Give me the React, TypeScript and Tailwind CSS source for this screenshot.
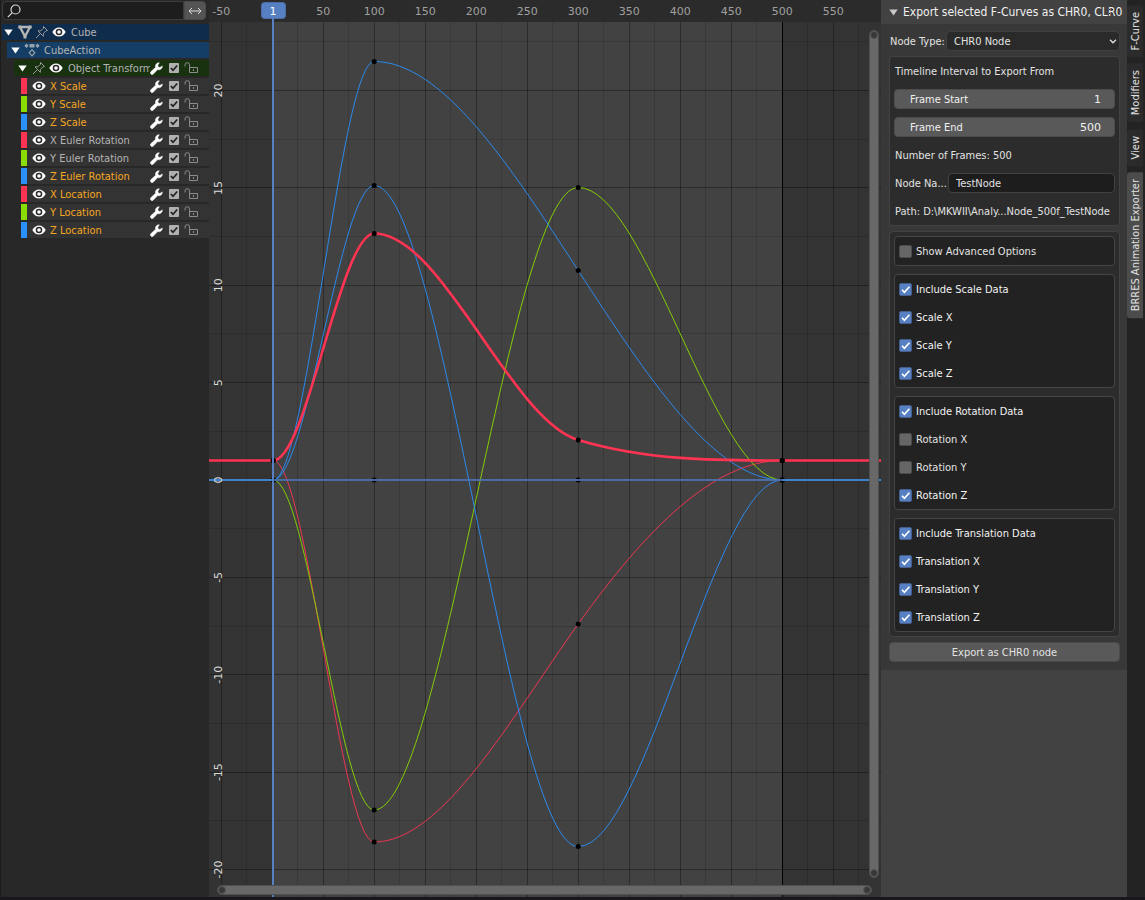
import type { ReactNode } from "react";

const RED = "#ff3352";
const GREEN = "#8bdc00";
const BLUE = "#2890ff";

/* ---------- icons ---------- */

function Eye() {
  return (
    <svg viewBox="0 0 14 12" className="h-3 w-3.5 shrink-0">
      <path d="M.3 6C2 3 4.300 1.500 7 1.500S12 3 13.700 6C12 9 9.700 10.500 7 10.500S2 9 .3 6z" fill="#fff" />
      <circle cx="7" cy="6" r="3.300" fill="#2c2c2c" />
      <circle cx="7" cy="6" r="1.800" fill="#fff" />
    </svg>
  );
}

function Pin() {
  return (
    <svg viewBox="0 0 14 14" className="size-3.5 shrink-0" fill="none" stroke="#9a9a9a" strokeWidth="1">
      <path d="M8.500 1.500l4 4-1.500.3-2.500 2.500-.2 3L3 6l3-.3 2.500-2.500zM5.300 8.700L1 13" strokeLinejoin="round" />
    </svg>
  );
}

function Wrench() {
  return (
    <svg viewBox="0 0 13 13" className="size-[13px] shrink-0">
      <path
        d="M9.300.8A3.500 3.500 0 0 0 5.600 5.300L1 9.600a1.600 1.600 0 0 0 2.300 2.500L7.700 7.600A3.500 3.500 0 0 0 12.300 3.900L9.900 5.400 8 4.800 7.900 3z"
        fill="#fff"
        stroke="#fff"
        strokeWidth=".5"
      />
    </svg>
  );
}

function Lock() {
  return (
    <svg viewBox="0 0 15 12" className="h-3 w-[15px] shrink-0" fill="none" stroke="#8c8c8c">
      <path d="M1 4.500V3a2.300 2.300 0 0 1 4.600 0v3.500M5.500 5.500h8v5h-8zM9.500 7v2" />
    </svg>
  );
}

function Triangle({ className = "" }: { className?: string }) {
  return (
    <svg viewBox="0 0 9 7" className={`h-[7px] w-[9px] shrink-0 ${className}`}>
      <path d="M.3.5h8.400L4.500 6.500z" fill="currentColor" />
    </svg>
  );
}

function MeshIcon() {
  return (
    <svg viewBox="0 0 14 14" className="size-3.5 shrink-0">
      <path d="M2 2h10L7 11.500z" fill="none" stroke="#b4b4b4" strokeWidth="2.400" strokeLinejoin="round" />
      <path d="M.3.6h3v3h-3zM10.700.6h3v3h-3zM5.500 10.700h3v2.800h-3z" fill="#b4b4b4" />
    </svg>
  );
}

function ActionIcon() {
  return (
    <svg viewBox="0 0 16 14" className="h-3.5 w-4 shrink-0" fill="#96a3ae">
      <path d="M2.500.5l2.200 2.200-2.200 2.200L.3 2.700zM13.500.5l2.200 2.200-2.200 2.200-2.200-2.200zM5.500 1h5v3.500h-5z" />
      <path d="M8 6.700l2.800 3.100L8 12.900 5.200 9.800z" fill="none" stroke="#96a3ae" strokeWidth="1.200" />
    </svg>
  );
}

/* ---------- channel list ---------- */

function RowTools({ name }: { name: string }) {
  return (
    <div className="flex items-center pr-[10px]">
      <button aria-label={`Modifiers of ${name}`}>
        <Wrench />
      </button>
      <label className="ml-[6px] grid size-[10px] place-items-center">
        <input
          type="checkbox"
          defaultChecked
          aria-label={`Enable ${name}`}
          className="peer col-start-1 row-start-1 size-[10px] appearance-none rounded-[1px] bg-[#b0b0b0]"
        />
        <svg viewBox="0 0 10 10" className="pointer-events-none invisible col-start-1 row-start-1 size-[10px] peer-checked:visible">
          <path d="M1.800 5l2.200 2.200 4.200-4.700" fill="none" stroke="#222" strokeWidth="1.700" />
        </svg>
      </label>
      <button aria-label={`Lock ${name}`} className="ml-[5px]">
        <Lock />
      </button>
    </div>
  );
}

const channels = [
  { name: "X Scale", swatch: "bg-[#ff3352]", selected: true },
  { name: "Y Scale", swatch: "bg-[#8bdc00]", selected: true },
  { name: "Z Scale", swatch: "bg-[#2890ff]", selected: true },
  { name: "X Euler Rotation", swatch: "bg-[#ff3352]", selected: false },
  { name: "Y Euler Rotation", swatch: "bg-[#8bdc00]", selected: false },
  { name: "Z Euler Rotation", swatch: "bg-[#2890ff]", selected: true },
  { name: "X Location", swatch: "bg-[#ff3352]", selected: true },
  { name: "Y Location", swatch: "bg-[#8bdc00]", selected: true },
  { name: "Z Location", swatch: "bg-[#2890ff]", selected: true },
];

function ChannelList() {
  return (
    <aside className="w-[209px] shrink-0 overflow-hidden border-l border-[#1c1c1c] bg-[#282828] text-[#b4b4b4]">
      <div className="mr-[3px] ml-px flex h-[22px] py-px">
        <div className="flex h-[19px] min-w-0 flex-1 items-center rounded-l-[4px] border border-[#3d3d3d] bg-[#1d1d1d] pl-1">
          <svg viewBox="0 0 14 14" className="size-3.5 shrink-0" fill="none" stroke="#d8d8d8" strokeWidth="1.200">
            <circle cx="8.500" cy="5.500" r="4.500" />
            <path d="M5.300 8.700L.8 13.200" />
          </svg>
          <input aria-label="Search channels" className="min-w-0 flex-1 bg-transparent px-1 outline-none" />
        </div>
        <button aria-label="Invert filter" className="grid h-[19px] w-[22px] place-items-center rounded-r-[4px] border border-[#4a4a4a] bg-[#545454]">
          <svg viewBox="0 0 14 8" className="h-2 w-3.5" fill="none" stroke="#dcdcdc">
            <path d="M1 4h12M4 1L1 4l3 3M10 1l3 3-3 3" />
          </svg>
        </button>
      </div>
      <ul className="mt-[2px] flex flex-col gap-[2px]">
        <li className="ml-px flex h-4 items-center bg-[#0f2c4d] pl-[2px]">
          <Triangle className="text-white" />
          <span className="ml-[5px]"><MeshIcon /></span>
          <button aria-label="Pin Cube" className="ml-[3px]"><Pin /></button>
          <button aria-label="Show Cube" className="ml-[3px]"><Eye /></button>
          <span className="ml-[5px]">Cube</span>
        </li>
        <li className="ml-[6px] flex h-4 items-center bg-[#153e66] pl-1">
          <Triangle className="text-white" />
          <span className="ml-[4px]"><ActionIcon /></span>
          <span className="ml-1">CubeAction</span>
        </li>
        <li className="ml-[13px] flex h-4 items-center bg-[#18310f] pl-1">
          <Triangle className="text-white" />
          <button aria-label="Pin Object Transforms" className="ml-[5px]"><Pin /></button>
          <button aria-label="Show Object Transforms" className="ml-[3px]"><Eye /></button>
          <span className="ml-[5px] min-w-0 flex-1 overflow-hidden whitespace-nowrap">Object Transforms</span>
          <RowTools name="Object Transforms" />
        </li>
        {channels.map((c) => (
          <li key={c.name} className="ml-5 flex h-4 items-center bg-[#333]">
            <span className={`h-4 w-[6px] ${c.swatch}`} />
            <button aria-label={`Show ${c.name}`} className="ml-[5px]"><Eye /></button>
            <span className={c.selected ? "ml-1 flex-1 whitespace-nowrap text-[#f5a623]" : "ml-1 flex-1 whitespace-nowrap"}>{c.name}</span>
            <RowTools name={c.name} />
          </li>
        ))}
      </ul>
    </aside>
  );
}

/* ---------- graph ---------- */

const frameX = (f: number) => 63.2 + f * 1.02;
const valueY = (v: number) => 480 - v * 19.475;

/* Keys are [x, y]; slopes are dy/dx at each key. Handles span a third of the interval. */
type Key = [number, number];

function curvePath(keys: Key[], slopes: number[]) {
  let d = `M${keys[0][0]} ${keys[0][1]}`;
  for (let i = 1; i < keys.length; i++) {
    const [x0, y0] = keys[i - 1];
    const [x1, y1] = keys[i];
    const h = (x1 - x0) / 3;
    d += `C${x0 + h} ${y0 + slopes[i - 1] * h} ${x1 - h} ${y1 - slopes[i] * h} ${x1} ${y1}`;
  }
  return d;
}

const X = [1, 100, 300, 500].map(frameX);
const curves = [
  { color: RED, width: 1, ys: [460.5, 842, 624, 460.5], slope: -1.4 },
  { color: GREEN, width: 1, ys: [480, 810, 187.5, 480], slope: 0 },
  { color: BLUE, width: 1, ys: [480, 61.5, 270.5, 480], slope: 1.54 },
  { color: BLUE, width: 1, ys: [480, 185.5, 846.5, 480], slope: 0 },
  { color: RED, width: 2.6, ys: [460.5, 233.5, 440, 460.5], slope: 0.3 },
];

const frames = Array.from({ length: 13 }, (_, i) => -50 + i * 50);
const values = [20, 15, 10, 5, 0, -5, -10, -15, -20];

function Graph() {
  return (
    <main className="relative min-w-0 flex-1 overflow-hidden bg-[#333]">
      <svg viewBox="0 0 672 897" preserveAspectRatio="xMinYMin slice" className="absolute inset-0 size-full" role="img" aria-label="F-Curves">
        <rect width="672" height="897" fill="#333" />
        <rect x={frameX(1)} y="22" width={frameX(500) - frameX(1)} height="875" fill="#424242" />
        <g shapeRendering="crispEdges">
          {frames.map((f) => (
            <g key={f}>
              <path d={`M${frameX(f + 25)} 22V897`} stroke="#000" strokeOpacity=".13" />
              <path d={`M${frameX(f)} 22V897`} stroke="#000" strokeOpacity=".33" />
            </g>
          ))}
          {values.map((v) => (
            <g key={v}>
              <path d={`M0 ${valueY(v + 2.5)}H672`} stroke="#000" strokeOpacity=".13" />
              <path d={`M0 ${valueY(v)}H672`} stroke="#000" strokeOpacity=".33" />
            </g>
          ))}
          <path d={`M${frameX(500)} 22V897`} stroke="#000" />
        </g>
        <g fill="none">
          {curves.map((c, i) => (
            <path
              key={i}
              d={curvePath(
                X.map((x, k) => [x, c.ys[k]] as Key),
                [0, 0, c.slope, 0],
              )}
              stroke={c.color}
              strokeOpacity={c.width > 1 ? 1 : 0.9}
              strokeWidth={c.width}
            />
          ))}
          <path d={`M0 460.500H${X[0]}M${X[3]} 460.500H672`} stroke={RED} strokeWidth="2.600" />
        </g>
        <g fill="#000">
          {curves.flatMap((c, i) => c.ys.map((y, k) => <circle key={`${i}-${k}`} cx={X[k]} cy={y} r="2.500" />))}
          <circle cx={X[1]} cy="480" r="2.500" />
          <circle cx={X[2]} cy="480" r="2.500" />
        </g>
        <path d={`M0 480H${X[0]}M${X[3]} 480H672`} stroke="#3e82cb" strokeWidth="2" />
        <path d={`M${X[0]} 480H${X[3]}`} stroke="#4d72ae" strokeWidth="2" strokeOpacity=".9" />
        <path d="M64 18V897" stroke="#5680c2" strokeWidth="2" />
        <rect width="672" height="22" fill="#2b2b2b" />
        <g fill="#a0a0a0" fontSize="11" textAnchor="middle" className="font-['DejaVu_Sans',sans-serif]">
          {frames
            .filter((f) => f !== 0)
            .map((f) => (
              <text key={f} x={frameX(f)} y="15">
                {f}
              </text>
            ))}
        </g>
        <g fill="#dcdcdc" fontSize="11" textAnchor="middle" className="font-['DejaVu_Sans',sans-serif]">
          {values.map((v) => (
            <text key={v} transform={`translate(13 ${valueY(v)}) rotate(-90)`}>
              {v}
            </text>
          ))}
        </g>
        <rect x="52.500" y="2.500" width="24" height="16" rx="3" fill="#5680c2" stroke="#4a6fa8" />
        <path d="M64 18V24" stroke="#5680c2" strokeWidth="2" />
        <text x="64" y="15" fill="#fff" fontSize="11" textAnchor="middle" className="font-['DejaVu_Sans',sans-serif]">
          1
        </text>
      </svg>
      <div className="absolute top-[30px] right-[2px] bottom-[19px] flex w-[10px] flex-col justify-between rounded-full border border-[#505050] bg-[#686868]">
        <span className="size-2 rounded-full border border-[#555] bg-[#383838]" />
        <span className="size-2 rounded-full border border-[#555] bg-[#383838]" />
      </div>
      <div className="absolute right-[9px] bottom-[2px] left-[8px] flex h-[10px] justify-between rounded-full border border-[#505050] bg-[#686868]">
        <span className="size-2 rounded-full border border-[#555] bg-[#383838]" />
        <span className="size-2 rounded-full border border-[#555] bg-[#383838]" />
      </div>
    </main>
  );
}

/* ---------- sidebar ---------- */

function Check({ label, on = true }: { label: string; on?: boolean }) {
  return (
    <label className={on ? "flex h-5 items-center gap-1 text-[#f2f2f2]" : "flex h-5 items-center gap-1"}>
      <span className="grid place-items-center">
        <input
          type="checkbox"
          defaultChecked={on}
          className="peer col-start-1 row-start-1 size-[13px] appearance-none rounded-[2px] border border-[#4c4c4c] bg-[#666] checked:border-[#45608f] checked:bg-[#5680c2]"
        />
        <svg viewBox="0 0 13 13" className="pointer-events-none invisible col-start-1 row-start-1 size-[13px] peer-checked:visible">
          <path d="M3 6.800l2.400 2.500 5-5.500" fill="none" stroke="#fff" strokeWidth="1.600" />
        </svg>
      </span>
      {label}
    </label>
  );
}

function Group({ children }: { children: ReactNode }) {
  return <div className="flex flex-col gap-2 rounded-[4px] border border-[#454545] bg-[#222] p-1">{children}</div>;
}

function NumberField({ id, label, value }: { id: string; label: string; value: string }) {
  return (
    <div className="-mx-px flex h-5 items-center rounded-[4px] border border-[#4c4c4c] bg-[#595959] px-[13px] text-[#f0f0f0]">
      <label htmlFor={id} className="flex-1 pl-[2px]">
        {label}
      </label>
      <input id={id} defaultValue={value} className="w-20 bg-transparent text-right font-['DejaVu_Sans',sans-serif] outline-none" />
    </div>
  );
}

const tabs = ["F-Curve", "Modifiers", "View", "BRRES Animation Exporter"];

function Sidebar() {
  return (
    <section className="w-[246px] shrink-0 overflow-hidden bg-[#424242] text-[#e2e2e2]">
      <header className="relative flex h-6 items-center bg-[#424242] pl-2 text-xs whitespace-nowrap text-[#f0f0f0]">
        <Triangle className="text-[#c8c8c8]" />
        <h2 className="ml-[5px]">Export selected F-Curves as CHR0, CLR0</h2>
        <svg viewBox="0 0 11 6" className="absolute top-[9px] right-[7px] h-[6px] w-[11px]" fill="#222">
          <path d="M0 0h1v1H0zM3 0h1v1H3zM6 0h1v1H6zM9 0h1v1H9zM0 4h1v1H0zM3 4h1v1H3zM6 4h1v1H6zM9 4h1v1H9z" />
        </svg>
      </header>
      <div className="flex flex-col gap-[5px] bg-[#383838] pt-[7px] pr-[7px] pb-2 pl-2">
        <div className="flex h-5 items-center">
          <label htmlFor="node-type" className="w-[57px] shrink-0 pl-px whitespace-nowrap">Node Type:</label>
          <div className="grid min-w-0 flex-1 items-center">
            <select id="node-type" className="col-start-1 row-start-1 h-5 appearance-none rounded-[4px] border border-[#404040] bg-[#2a2a2a] px-[7px] outline-none">
              <option>CHR0 Node</option>
            </select>
            <svg viewBox="0 0 8 5" className="pointer-events-none col-start-1 row-start-1 mr-[3px] h-[5px] w-2 justify-self-end" fill="none" stroke="#e0e0e0" strokeWidth="1.300">
              <path d="M1 .8l3 3 3-3" />
            </svg>
          </div>
        </div>
        <div className="flex flex-col gap-2 rounded-[4px] border border-[#424242] bg-[#2c2c2c] px-[5px] py-1">
          <p className="flex h-5 items-center">Timeline Interval to Export From</p>
          <NumberField id="frame-start" label="Frame Start" value="1" />
          <NumberField id="frame-end" label="Frame End" value="500" />
          <p className="flex h-5 items-center">Number of Frames: 500</p>
          <div className="-mr-px flex h-5 items-center">
            <label htmlFor="node-name" className="w-[53px] shrink-0">Node Na...</label>
            <input id="node-name" defaultValue="TestNode" className="h-5 min-w-0 flex-1 rounded-[4px] border border-[#424242] bg-[#1d1d1d] px-[7px] outline-none" />
          </div>
          <p className="flex h-5 items-center whitespace-nowrap">Path: D:\MKWII\Analy...Node_500f_TestNode</p>
        </div>
        <div className="flex flex-col gap-2 rounded-[4px] border border-[#424242] bg-[#2c2c2c] p-1">
          <Group>
            <Check label="Show Advanced Options" on={false} />
          </Group>
          <Group>
            <Check label="Include Scale Data" />
            <Check label="Scale X" />
            <Check label="Scale Y" />
            <Check label="Scale Z" />
          </Group>
          <Group>
            <Check label="Include Rotation Data" />
            <Check label="Rotation X" on={false} />
            <Check label="Rotation Y" on={false} />
            <Check label="Rotation Z" />
          </Group>
          <Group>
            <Check label="Include Translation Data" />
            <Check label="Translation X" />
            <Check label="Translation Y" />
            <Check label="Translation Z" />
          </Group>
        </div>
        <button className="h-5 rounded-[4px] border border-[#4a4a4a] bg-[#595959]">Export as CHR0 node</button>
      </div>
    </section>
  );
}

function Tabs() {
  return (
    <nav className="flex w-[18px] shrink-0 flex-col gap-[6px] bg-[#232323] pt-[5px] pr-[2px] text-[#e2e2e2]">
      {tabs.map((t, i) => (
        <button
          key={t}
          className={
            i === 3
              ? "flex rotate-180 items-center justify-center rounded-r-[3px] bg-[#4c4c4c] pt-[7px] pb-[7px] [writing-mode:vertical-rl]"
              : "flex rotate-180 items-center justify-center rounded-r-[3px] bg-[#2b2b2b] pt-[7px] pb-[7px] [writing-mode:vertical-rl]"
          }
        >
          {t}
        </button>
      ))}
    </nav>
  );
}

export default function App() {
  return (
    <div className="flex min-h-screen flex-col bg-[#19171b] font-['DejaVu_Sans_Condensed','DejaVu_Sans',sans-serif] text-[11px] leading-[17px]">
      <div className="mb-[3px] flex flex-1">
        <ChannelList />
        <Graph />
        <Sidebar />
        <Tabs />
      </div>
    </div>
  );
}
